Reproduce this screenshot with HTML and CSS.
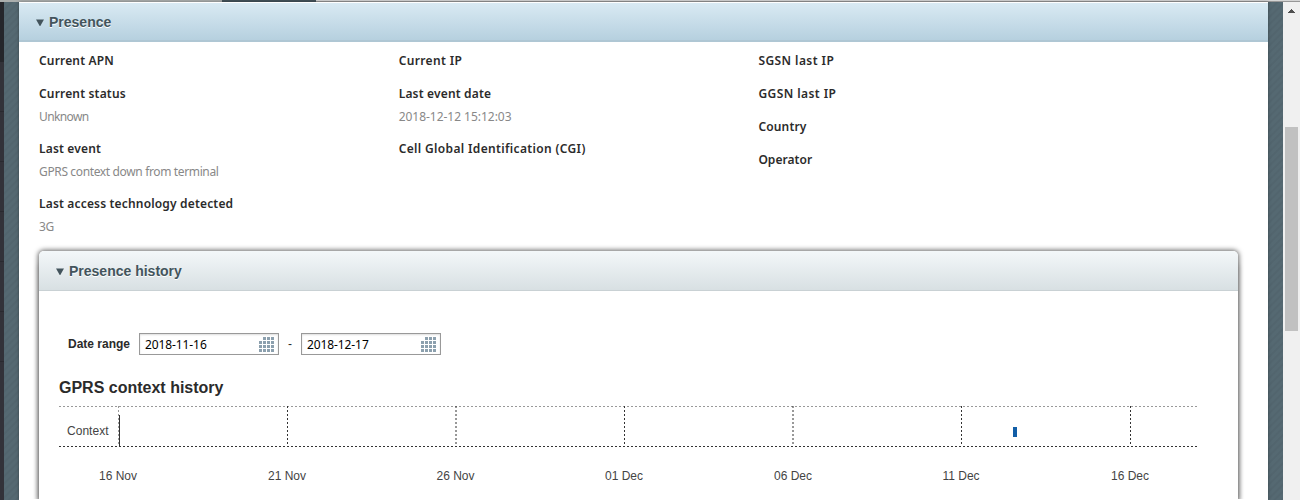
FILE: index.html
```html
<!DOCTYPE html>
<html lang="en">
<head>
<meta charset="utf-8">
<title>Presence</title>
<link rel="stylesheet" href="styles.css">
</head>
<body>
<div class="topbar"><span class="topbar-left"></span><span class="topbar-tab"></span><span class="topbar-right"></span></div>
<div class="page">
  <aside class="rail"><i></i><i></i><i></i><i></i><i></i><i></i><i></i></aside>
  <main class="backdrop">
    <section class="panel">
      <h2 class="panel-title"><svg class="arrow" width="8" height="7"><path d="M0 .5H8L4.3 7H3.7Z"/></svg><span>Presence</span></h2>
      <div class="details">
        <dl>
          <dt>Current APN</dt>
          <dt>Current status</dt><dd class="tightest">Unknown</dd>
          <dt>Last event</dt><dd class="tight">GPRS context down from terminal</dd>
          <dt>Last access technology detected</dt><dd class="tight">3G</dd>
        </dl>
        <dl>
          <dt class="wide">Current IP</dt>
          <dt>Last event date</dt><dd>2018-12-12 15:12:03</dd>
          <dt class="wide">Cell Global Identification (CGI)</dt>
        </dl>
        <dl>
          <dt class="widest">SGSN last IP</dt>
          <dt class="widest">GGSN last IP</dt>
          <dt>Country</dt>
          <dt class="plain">Operator</dt>
        </dl>
      </div>
      <section class="history">
        <h3 class="history-title"><svg class="arrow" width="8" height="7"><path d="M0 .5H8L4.3 7H3.7Z"/></svg><span>Presence history</span></h3>
        <div class="range">
          <label>Date range</label>
          <div class="field"><span>2018-11-16</span><svg class="calendar" width="15" height="15"><path d="M4 0h3v3h-3zM8 0h3v3h-3zM12 0h3v3h-3zM0 4h3v3h-3zM4 4h3v3h-3zM8 4h3v3h-3zM12 4h3v3h-3zM0 8h3v3h-3zM4 8h3v3h-3zM8 8h3v3h-3zM12 8h3v3h-3zM0 12h3v3h-3zM4 12h3v3h-3zM8 12h3v3h-3zM12 12h3v3h-3z"/></svg></div>
          <span class="dash">-</span>
          <div class="field"><span>2018-12-17</span><svg class="calendar" width="15" height="15"><path d="M4 0h3v3h-3zM8 0h3v3h-3zM12 0h3v3h-3zM0 4h3v3h-3zM4 4h3v3h-3zM8 4h3v3h-3zM12 4h3v3h-3zM0 8h3v3h-3zM4 8h3v3h-3zM8 8h3v3h-3zM12 8h3v3h-3zM0 12h3v3h-3zM4 12h3v3h-3zM8 12h3v3h-3zM12 12h3v3h-3z"/></svg></div>
        </div>
        <h4>GPRS context history</h4>
        <svg class="chart" width="1140" height="90">
          <g class="grid">
            <path class="light" d="M0 2.5H1138"/>
            <path d="M0 42.5H1138"/>
            <path class="light" d="M59.5 2V42"/>
            <path d="M228.5 2V42M397 2V42M565.5 2V42M734 2V42M902.5 2V42M1071.5 2V42"/>
          </g>
          <path class="axis" d="M60.5 11V42"/>
          <rect class="event" x="954" y="23" width="4" height="10"/>
          <text x="8" y="31" textLength="41.5">Context</text>
          <g class="ticks">
            <text x="59" y="76">16 Nov</text><text x="228" y="76">21 Nov</text><text x="396.5" y="76">26 Nov</text><text x="565" y="76">01 Dec</text><text x="734" y="76">06 Dec</text><text x="902" y="76">11 Dec</text><text x="1071" y="76">16 Dec</text>
          </g>
        </svg>
      </section>
    </section>
  </main>
  <div class="scrollbar"><svg width="7" height="4"><path d="M3 0h1v1h1v1h1v1h1v1h-7v-1h1v-1h1v-1h1z"/></svg><div class="thumb"></div></div>
</div>
</body>
</html>
```
FILE: styles.css
```css
* { box-sizing: border-box; }
body { margin: 0; height: 500px; overflow: hidden; background: #fff; color: #2b2b2b; font-family: "Liberation Sans", Arial, sans-serif; }
.topbar { display: flex; height: 2px; }
.topbar-left { width: 222px; background: #aaaead; }
.topbar-tab { width: 94px; background: #43525a; }
.topbar-right { flex: 1; background: linear-gradient(#d5d5d5 50%, #979797 50%); }
.page { display: flex; height: 498px; }
.rail { width: 4px; background: #25262b; padding-top: 60px; }
.rail i { display: block; height: 50px; background: #323239; border-bottom: 1px solid #29292f; }
.rail i:last-child { height: 138px; border: 0; }
.backdrop { width: 1279px; padding: 0 15px; background: repeating-linear-gradient(135deg, #52656e 0 1px, #556972 2px 4px, #52656e 5px); }
.panel { width: 1249px; height: 498px; background: #fff; box-shadow: 0 0 3px rgba(0,0,0,.35); padding-top: 1px; }
.panel-title { margin: 0; height: 39px; padding: 0 17px; display: flex; align-items: center; background: linear-gradient(#d9eaf3, #b6d0df); border-bottom: 2px solid #afc7d4; }
.panel-title, .history-title { font-size: 14px; font-weight: bold; color: #43545c; text-shadow: 0 1px 0 #fff; }
.arrow { fill: #43545c; margin-right: 5px; }
.panel-title .arrow { margin-top: 2px; }
.details { display: flex; height: 209px; padding: 9px 20px 0; font: 12px "Noto Sans", "Open Sans", sans-serif; }
.details dl { width: 359.7px; margin: 0; }
dt { height: 20px; line-height: 20px; font-weight: 600; margin-bottom: 13px; white-space: nowrap; letter-spacing: .17px; }
dt.wide { letter-spacing: .35px; }
dt.widest { letter-spacing: .43px; }
dt.plain { letter-spacing: .05px; }
dd { margin: -11px 0 11px; height: 22px; line-height: 22px; color: #888; white-space: nowrap; letter-spacing: -.03px; }
dd.tight { letter-spacing: -.36px; }
dd.tightest { letter-spacing: -.6px; }
.history { width: 1199px; height: 249px; margin-left: 20px; background: #fff; border-radius: 5px 5px 0 0; box-shadow: 0 0 5px 1px rgba(0,0,0,.6), 0 12px 5px 1px rgba(0,0,0,.2); clip-path: inset(-8px -8px 1px); }
.history-title { margin: 0; height: 40px; padding-left: 17px; display: flex; align-items: center; background: linear-gradient(#f3f7f9, #d8e0e3); border-bottom: 1px solid #c9d1d4; border-radius: 5px 5px 0 0; }
.history-title .arrow { margin-top: 2px; }
.range { display: flex; height: 22px; margin: 42px 0 0 29px; align-items: center; font-size: 12px; }
.range label { width: 71px; font-weight: 600; white-space: nowrap; }
.field { width: 140px; height: 22px; padding: 0 4px 0 5px; border: 1px solid #999; display: flex; align-items: center; justify-content: space-between; color: #000; font: 12px "Noto Sans", sans-serif; letter-spacing: -.1px; box-shadow: inset 0 1px 2px #ddd; }
.calendar { fill: #8ca0ae; }
.dash { width: 22px; text-align: center; }
h4 { margin: 23px 0 0 20px; height: 26px; line-height: 20px; font-size: 16px; }
.chart { display: block; margin-left: 20px; font-size: 12px; fill: #444; }
.grid path { stroke: #333; stroke-dasharray: 2 2; }
.grid .light { stroke: #999; }
.axis { stroke: #333; }
.event { fill: #125ea7; }
.ticks { text-anchor: middle; }
.scrollbar { width: 17px; background: #f0f0f0; padding: 7px 2px 0; display: flex; flex-direction: column; align-items: center; fill: #505050; }
.thumb { width: 13px; height: 204px; margin-top: 114px; background: #c1c1c1; }
```
